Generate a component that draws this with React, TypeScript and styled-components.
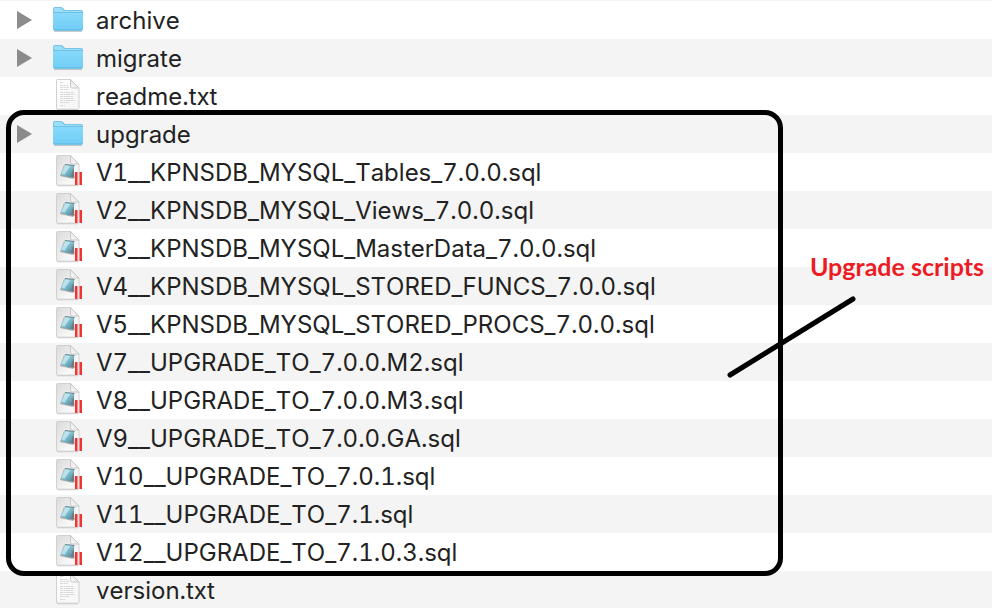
import React from "react";
import styled, { createGlobalStyle } from "styled-components";

const GlobalStyle = createGlobalStyle`
  * { box-sizing: border-box; }
  body {
    margin: 0;
    background: #ffffff;
    color: #222222;
    font-family: Inter, "Liberation Sans", sans-serif;
    overflow: hidden;
  }
`;

const Browser = styled.main`
  border-top: 1px solid #f4f4f4;
`;

const List = styled.ul`
  margin: 0;
  padding: 0;
  list-style: none;
`;

const Row = styled.li<{ $shaded: boolean }>`
  display: grid;
  grid-template-columns: 32px 32px 1fr;
  column-gap: 8px;
  align-items: center;
  height: 38px;
  padding-left: 12px;
  background: ${(p) => (p.$shaded ? "#f4f4f4" : "#ffffff")};
`;

const Disclosure = styled.button`
  display: flex;
  align-items: flex-start;
  width: 24px;
  height: 24px;
  padding: 3px 4px;
  border: 0;
  background: none;
`;

const FileName = styled.span`
  padding-top: 2px;
  padding-left: 4px;
  font-size: 24px;
  line-height: 36px;
  font-kerning: none;
  font-variant-numeric: tabular-nums;
  white-space: nowrap;
`;

const Highlighted = styled.section`
  position: relative;
`;

const Frame = styled.div`
  position: absolute;
  top: -5px;
  bottom: -5px;
  left: 6px;
  right: 209px;
  border: 5px solid #000000;
  border-radius: 18px;
  pointer-events: none;
`;

const Callout = styled.div`
  position: absolute;
  top: 135px;
  right: 8px;
  display: flex;
  flex-direction: column;
  align-items: flex-end;
  pointer-events: none;
`;

const CalloutText = styled.strong`
  color: #ed1c24;
  font-family: Lato, "Open Sans", sans-serif;
  font-size: 25px;
  font-weight: 700;
  line-height: 32px;
  white-space: nowrap;
`;

const Pointer = styled.svg`
  display: block;
  width: 130px;
  height: 82px;
  margin-top: 14px;
  margin-right: 127px;
`;

const Glyph = styled.svg`
  display: block;
  width: 32px;
  height: 36px;
`;

const Triangle = () => (
  <svg width="16" height="18" viewBox="0 0 16 18" aria-hidden="true">
    <path d="M1 0 16 9 1 18Z" fill="#8b8b8b" />
  </svg>
);

const FolderIcon = ({ id }: { id: string }) => (
  <Glyph viewBox="0 1 32 36" aria-hidden="true">
    <defs>
      <linearGradient id={`${id}-front`} x1="0" y1="0" x2="0" y2="1">
        <stop offset="0" stopColor="#87d9fb" />
        <stop offset="1" stopColor="#70cdf5" />
      </linearGradient>
    </defs>
    <path d="M2 30.5h28" stroke="#000000" strokeOpacity=".2" />
    <path d="M1 8q0-2 2-2h6q1 0 2 1l2 2h16q2 0 2 2v17q0 2-2 2H3q-2 0-2-2Z" fill="#75c5e8" />
    <path d="M2 8q0-1 1-1h6l3 3h17q1 0 1 1v2H2Z" fill="#9cdef8" />
    <path d="M1 12h30v15q0 2-2 2H3q-2 0-2-2Z" fill={`url(#${id}-front)`} />
    <path d="M1 11.5h30" stroke="#67b9df" strokeOpacity=".8" />
    <path d="M2 28.5h28" stroke="#63b9df" strokeOpacity=".7" />
  </Glyph>
);

const Page = ({ id, fill }: { id: string; fill: string }) => (
  <>
    <defs>
      <linearGradient id={`${id}-fold`} x1="0" y1="1" x2="1" y2="0">
        <stop offset="0" stopColor="#ffffff" />
        <stop offset="1" stopColor="#d0d0d0" />
      </linearGradient>
      <linearGradient id={`${id}-sheet`} x1="0" y1="0" x2="1" y2="1">
        <stop offset="0" stopColor={fill} />
        <stop offset=".7" stopColor="#f7f7f7" />
      </linearGradient>
    </defs>
    <path d="M6 33.7h21" stroke="#999999" strokeOpacity=".6" />
    <path
      d="M6.500 3.500h13l8.500 8.500v20q0 1.200-1.200 1.200H6.700q-1.200 0-1.200-1.200V4.500q0-1 1-1Z"
      fill={`url(#${id}-sheet)`}
      stroke="#d0d0d0"
    />
    <path d="M19.500 3.500v6.500q0 2 2 2H28Z" fill={`url(#${id}-fold)`} stroke="#c8c8c8" />
  </>
);

const TextIcon = ({ id }: { id: string }) => (
  <Glyph viewBox="1 2 32 36" aria-hidden="true">
    <Page id={id} fill="#ffffff" />
    <path
      d="M9 6.500h4M9 9.500h8M9 11.500h9M9 13.500h8M9 16.500h14M9 18.500h15M9 20.500h13M9 22.500h14M9 24.500h15M9 26.500h9M9 29.500h5"
      stroke="#d8d8d8"
      strokeDasharray="3 .6 2 .4 4 .5"
    />
  </Glyph>
);

const SqlIcon = ({ id }: { id: string }) => (
  <Glyph viewBox="1 2 32 36" aria-hidden="true">
    <Page id={id} fill="#dadada" />
    <defs>
      <linearGradient id={`${id}-pad`} x1="0" y1="0" x2="1" y2="1">
        <stop offset="0" stopColor="#c4e8ef" />
        <stop offset=".5" stopColor="#7fbccc" />
        <stop offset="1" stopColor="#397f98" />
      </linearGradient>
    </defs>
    <path d="m13 13-4 11 11 2.500 2.500.500V15Z" fill="#a8a8a8" />
    <path d="m22.500 14 1 12-4-1Z" fill="#6f7b80" />
    <path d="m14 12.500 9.500 1-4.500 12-9.500-3Z" fill={`url(#${id}-pad)`} />
    <path d="m14 12.500 9.500 1" stroke="#6b858e" />
    <path d="m10.500 21.500 4-8 5 .5-6 8.500Z" fill="#d9f3f8" fillOpacity=".6" />
    <path d="M24 20h2.500v13H24ZM28.500 20H31v13h-2.500Z" fill="#ef3434" />
  </Glyph>
);

type Kind = "folder" | "text" | "sql";
type Entry = { name: string; kind: Kind };

const icons = { folder: FolderIcon, text: TextIcon, sql: SqlIcon };

const before: Entry[] = [
  { name: "archive", kind: "folder" },
  { name: "migrate", kind: "folder" },
  { name: "readme.txt", kind: "text" },
];

const upgrades: Entry[] = [
  { name: "upgrade", kind: "folder" },
  { name: "V1__KPNSDB_MYSQL_Tables_7.0.0.sql", kind: "sql" },
  { name: "V2__KPNSDB_MYSQL_Views_7.0.0.sql", kind: "sql" },
  { name: "V3__KPNSDB_MYSQL_MasterData_7.0.0.sql", kind: "sql" },
  { name: "V4__KPNSDB_MYSQL_STORED_FUNCS_7.0.0.sql", kind: "sql" },
  { name: "V5__KPNSDB_MYSQL_STORED_PROCS_7.0.0.sql", kind: "sql" },
  { name: "V7__UPGRADE_TO_7.0.0.M2.sql", kind: "sql" },
  { name: "V8__UPGRADE_TO_7.0.0.M3.sql", kind: "sql" },
  { name: "V9__UPGRADE_TO_7.0.0.GA.sql", kind: "sql" },
  { name: "V10__UPGRADE_TO_7.0.1.sql", kind: "sql" },
  { name: "V11__UPGRADE_TO_7.1.sql", kind: "sql" },
  { name: "V12__UPGRADE_TO_7.1.0.3.sql", kind: "sql" },
];

const after: Entry[] = [{ name: "version.txt", kind: "text" }];

const Files = ({ entries, start }: { entries: Entry[]; start: number }) => (
  <List>
    {entries.map((entry, i) => {
      const Icon = icons[entry.kind];
      const nameId = `file-${start + i}`;
      return (
        <Row key={entry.name} $shaded={(start + i) % 2 === 1}>
          {entry.kind === "folder" ? (
            <Disclosure type="button" aria-labelledby={nameId}>
              <Triangle />
            </Disclosure>
          ) : (
            <span />
          )}
          <Icon id={`icon-${start + i}`} />
          <FileName id={nameId}>{entry.name}</FileName>
        </Row>
      );
    })}
  </List>
);

export default function App() {
  return (
    <>
      <GlobalStyle />
      <Browser>
        <Files entries={before} start={0} />
        <Highlighted>
          <Files entries={upgrades} start={before.length} />
          <Frame />
          <Callout>
            <CalloutText>Upgrade scripts</CalloutText>
            <Pointer viewBox="0 0 130 82" aria-hidden="true">
              <path d="M3 79 126 3" stroke="#000000" strokeWidth="5" strokeLinecap="round" />
            </Pointer>
          </Callout>
        </Highlighted>
        <Files entries={after} start={before.length + upgrades.length} />
      </Browser>
    </>
  );
}
